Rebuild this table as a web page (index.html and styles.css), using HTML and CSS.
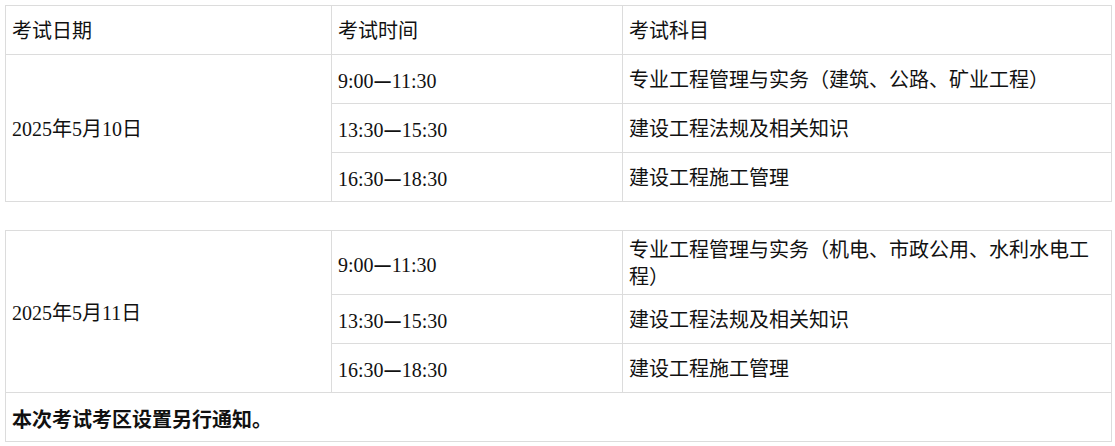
FILE: index.html
```html
<!DOCTYPE html>
<html lang="zh-CN">
<head>
<meta charset="utf-8">
<link rel="stylesheet" href="styles.css">
</head>
<body>
<div class="page">
  <table class="exam">
    <colgroup><col class="c1"><col class="c2"><col class="c3"></colgroup>
    <tr><td>考试日期</td><td>考试时间</td><td>考试科目</td></tr>
    <tr><td rowspan="3">2025年5月10日</td><td>9:00<span class="dash">—</span>11:30</td><td>专业工程管理与实务（建筑、公路、矿业工程）</td></tr>
    <tr><td>13:30<span class="dash">—</span>15:30</td><td>建设工程法规及相关知识</td></tr>
    <tr><td>16:30<span class="dash">—</span>18:30</td><td>建设工程施工管理</td></tr>
  </table>
  <table class="exam second">
    <colgroup><col class="c1"><col class="c2"><col class="c3"></colgroup>
    <tr><td rowspan="3">2025年5月11日</td><td>9:00<span class="dash">—</span>11:30</td><td>专业工程管理与实务（机电、市政公用、水利水电工程）</td></tr>
    <tr><td>13:30<span class="dash">—</span>15:30</td><td>建设工程法规及相关知识</td></tr>
    <tr><td>16:30<span class="dash">—</span>18:30</td><td>建设工程施工管理</td></tr>
    <tr><td colspan="3" class="note">本次考试考区设置另行通知。</td></tr>
  </table>
</div>
</body>
</html>
```

FILE: styles.css
```css
html, body {
  margin: 0;
  padding: 0;
  background: #fff;
}
.page {
  padding: 5px 5px 0 5px;
  font-family: "Liberation Serif", "Noto Sans CJK SC", serif;
  font-size: 20px;
  color: #111;
}
.exam {
  width: 1106px;
  border-collapse: collapse;
  table-layout: fixed;
}
.exam.second {
  margin-top: 28px;
}
.c1 { width: 326px; }
.c2 { width: 291px; }
.c3 { width: 489px; }
.exam td {
  border: 1px solid #dcdcdc;
  height: 49px;
  padding: 6px 6px 3px 6px;
  line-height: 27px;
  vertical-align: middle;
  box-sizing: border-box;
}
.dash {
  font-family: "Noto Sans CJK SC", sans-serif;
  font-weight: bold;
}
.exam td.note {
  font-weight: bold;
  font-family: "Noto Sans CJK SC", sans-serif;
}
```
